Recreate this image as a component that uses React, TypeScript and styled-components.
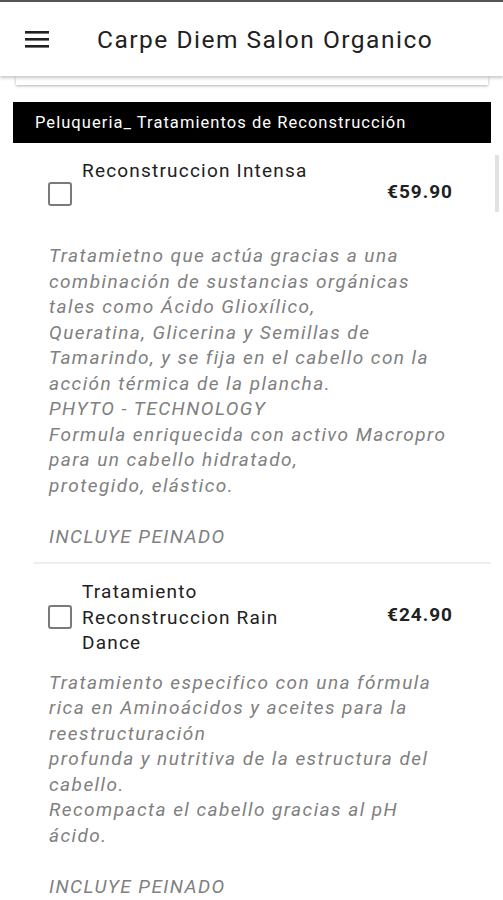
import styled, { createGlobalStyle } from "styled-components";

const GlobalStyle = createGlobalStyle`
  body {
    margin: 0;
    background: #fff;
    font-family: Roboto, "Noto Sans", sans-serif;
    overflow: hidden;
  }
`;

const Page = styled.div`
  width: 503px;
  height: 900px;
  overflow: hidden;
  border-top: 2px solid #555;
  box-sizing: border-box;
`;

const Header = styled.header`
  position: relative;
  z-index: 2;
  height: 74px;
  display: flex;
  align-items: center;
  padding-left: 25px;
  background: #fff;
  box-shadow: 0 2px 3px rgba(0, 0, 0, 0.22);
`;

const Title = styled.h1`
  margin: 0 0 0 48px;
  font-size: 24.5px;
  font-weight: 400;
  color: #212121;
  letter-spacing: 1.5px;
`;

const PeekCard = styled.div`
  height: 9px;
  margin: 0 15px 0 16px;
  background: #fff;
  box-shadow: 0 1px 3px rgba(0, 0, 0, 0.3);
`;

const CategoryBar = styled.div`
  height: 41px;
  margin: 17px 12px 0 13px;
  padding-left: 22px;
  display: flex;
  align-items: center;
  background: #000;
  color: #fff;
  font-size: 16.5px;
  font-weight: 400;
  letter-spacing: 1.05px;
`;

const List = styled.div`
  position: relative;
  margin: 0 12px 0 34px;
  padding-top: 15px;
`;

const Scrollbar = styled.div`
  position: absolute;
  top: 12px;
  right: -8px;
  width: 4px;
  height: 57px;
  background: #e2e2e2;
`;

const Item = styled.div<{ $last?: boolean }>`
  padding: 0 38px 13px 14px;
  margin-bottom: 15px;
  border-bottom: ${(p) => (p.$last ? "none" : "2px solid #eeeeee")};
`;

const ItemHead = styled.div<{ $minHeight: number }>`
  display: flex;
  align-items: center;
  min-height: ${(p) => p.$minHeight}px;
`;

const Checkbox = styled.span`
  flex: none;
  width: 20px;
  height: 20px;
  border: 2px solid #7a7a7a;
  border-radius: 3px;
`;

const ItemTitle = styled.div`
  align-self: flex-start;
  width: 240px;
  margin-left: 10px;
  font-size: 19px;
  line-height: 25.5px;
  color: #212121;
  letter-spacing: 1.2px;
`;

const Price = styled.div`
  margin-left: auto;
  margin-bottom: 5px;
  font-size: 19px;
  font-weight: 700;
  color: #212121;
  letter-spacing: 1px;
`;

const Description = styled.p`
  margin: 14px 0 0 1px;
  font-size: 19px;
  font-style: italic;
  line-height: 25.5px;
  color: #808080;
  letter-spacing: 1.45px;
  white-space: pre-line;
`;

const MenuIcon = () => (
  <svg width="24" height="17" viewBox="0 0 24 17">
    <rect x="0" y="0" width="24" height="2.6" fill="#212121" />
    <rect x="0" y="7" width="24" height="2.6" fill="#212121" />
    <rect x="0" y="14" width="24" height="2.6" fill="#212121" />
  </svg>
);

const services = [
  {
    title: "Reconstruccion Intensa",
    price: "€59.90",
    minHeight: 71,
    text: `Tratamietno que actúa gracias a una
combinación de sustancias orgánicas
tales como Ácido Glioxílico,
Queratina, Glicerina y Semillas de
Tamarindo, y se fija en el cabello con la
acción térmica de la plancha.
PHYTO - TECHNOLOGY
Formula enriquecida con activo Macropro
para un cabello hidratado,
protegido, elástico.

INCLUYE PEINADO`,
  },
  {
    title: "Tratamiento Reconstruccion Rain Dance",
    price: "€24.90",
    minHeight: 71,
    text: `Tratamiento especifico con una fórmula
rica en Aminoácidos y aceites para la
reestructuración
profunda y nutritiva de la estructura del
cabello.
Recompacta el cabello gracias al pH
ácido.

INCLUYE PEINADO`,
  },
];

const App = () => {
  return (
    <Page>
      <GlobalStyle />
      <Header>
        <MenuIcon />
        <Title>Carpe Diem Salon Organico</Title>
      </Header>
      <PeekCard />
      <CategoryBar>Peluqueria_ Tratamientos de Reconstrucción</CategoryBar>
      <List>
        <Scrollbar />
        {services.map((s, i) => (
          <Item key={s.title} $last={i === services.length - 1}>
            <ItemHead $minHeight={s.minHeight}>
              <Checkbox />
              <ItemTitle>{s.title}</ItemTitle>
              <Price>{s.price}</Price>
            </ItemHead>
            <Description>{s.text}</Description>
          </Item>
        ))}
      </List>
    </Page>
  );
};

export default App;
